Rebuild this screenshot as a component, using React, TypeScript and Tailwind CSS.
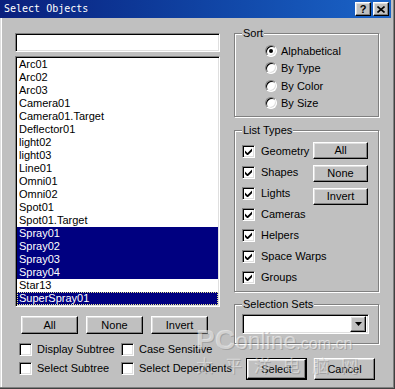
import React from "react";

const objects: string[] = [
  "Arc01",
  "Arc02",
  "Arc03",
  "Camera01",
  "Camera01.Target",
  "Deflector01",
  "light02",
  "light03",
  "Line01",
  "Omni01",
  "Omni02",
  "Spot01",
  "Spot01.Target",
  "Spray01",
  "Spray02",
  "Spray03",
  "Spray04",
  "Star13",
  "SuperSpray01",
];

const selected = ["Spray01", "Spray02", "Spray03", "Spray04", "SuperSpray01"];

const sortOptions = ["Alphabetical", "By Type", "By Color", "By Size"];
const listTypes = ["Geometry", "Shapes", "Lights", "Cameras", "Helpers", "Space Warps", "Groups"];

const raised =
  "flex items-center justify-center border border-t-white border-l-white border-b-black border-r-black bg-[#c0c0c0] shadow-[inset_-1px_-1px_0_#808080,inset_1px_1px_0_#dfdfdf]";
const sunken =
  "border border-t-[#808080] border-l-[#808080] border-b-white border-r-white bg-white shadow-[inset_1px_1px_0_#000,inset_-1px_-1px_0_#dfdfdf]";
const groupBox =
  "min-w-0 border border-[#808080] px-[7px] shadow-[1px_1px_0_#fff,inset_1px_1px_0_#fff]";
const legend = "bg-[#c0c0c0] px-[1px] text-[11px] leading-[13px]";

const CheckBox: React.FC<{ checked?: boolean }> = ({ checked }) => (
  <span className={`flex h-[13px] w-[13px] shrink-0 items-center justify-center ${sunken}`}>
    {checked && (
      <svg width="7" height="7" viewBox="0 0 7 7">
        <path d="M0 2.5 L2.5 5 L7 0.5 V3.2 L2.5 7.5 L0 5 Z" fill="#000" />
      </svg>
    )}
  </span>
);

const Radio: React.FC<{ checked?: boolean }> = ({ checked }) => (
  <span
    className={`flex h-[12px] w-[12px] shrink-0 items-center justify-center rounded-full ${sunken}`}
  >
    {checked && <span className="h-[4px] w-[4px] rounded-full bg-black" />}
  </span>
);

export default function App() {
  return (
    <div className="relative flex h-[389px] w-[395px] flex-col overflow-hidden bg-[#c0c0c0] pr-[4px] pb-[2px] font-['Liberation_Sans',Arial,sans-serif] text-[11px] text-black shadow-[inset_-1px_-1px_0_#404040,inset_-2px_-2px_0_#808080,inset_1px_0_0_#dfdfdf,inset_2px_0_0_#fff]">
      {/* title bar */}
      <div className="flex h-[18px] shrink-0 items-center bg-linear-to-r from-[#0a1f7d] to-[#1b64c8] pl-[4px] pr-[2px]">
        <span className="font-['DejaVu_Sans_Mono',monospace] text-[10px] leading-none text-white">
          Select Objects
        </span>
        <div className="ml-auto flex gap-[2px]">
          <button className={`h-[14px] w-[16px] ${raised} text-[11px] font-bold leading-none`}>
            ?
          </button>
          <button className={`h-[14px] w-[16px] ${raised}`}>
            <svg width="8" height="7" viewBox="0 0 8 7">
              <path d="M0.5 0.5 L7.5 6.5 M7.5 0.5 L0.5 6.5" stroke="#000" strokeWidth="1.6" />
            </svg>
          </button>
        </div>
      </div>

      {/* body */}
      <div className="flex flex-1 gap-[14px] pl-[15px] pt-[9px]">
        {/* left column */}
        <div className="mt-[6px] flex w-[205px] flex-col">
          <div className={`h-[19px] ${sunken}`} />
          <div className={`mt-[4px] h-[251px] p-px ${sunken}`}>
            {objects.map((name) => {
              const sel = selected.includes(name);
              const focus = name === "SuperSpray01";
              return (
                <div
                  key={name}
                  className={`h-[13px] whitespace-nowrap pl-[2px] leading-[13px] ${
                    sel ? "bg-[#000080] text-white" : ""
                  } ${focus ? "outline-1 -outline-offset-1 outline-dotted outline-[#e8e890]" : ""}`}
                >
                  {name}
                </div>
              );
            })}
          </div>
          <div className="mt-[9px] flex gap-[8px] pl-[6px]">
            {["All", "None", "Invert"].map((b) => (
              <button key={b} className={`h-[18px] w-[57px] ${raised}`}>
                {b}
              </button>
            ))}
          </div>
          <div className="mt-[9px] grid grid-cols-[102px_1fr] gap-y-[6px] pl-[4px]">
            {["Display Subtree", "Case Sensitive", "Select Subtree", "Select Dependents"].map(
              (label) => (
                <label key={label} className="flex h-[13px] items-center gap-[5px]">
                  <CheckBox />
                  <span className="whitespace-nowrap">{label}</span>
                </label>
              )
            )}
          </div>
        </div>

        {/* right column */}
        <div className="flex w-[145px] flex-col">
          <fieldset className={`h-[90px] ${groupBox}`}>
            <legend className={legend}>Sort</legend>
            <div className="pt-[2px] pl-[23px]">
              {sortOptions.map((o, i) => (
                <div key={o} className="flex h-[17.5px] items-center gap-[4px]">
                  <Radio checked={i === 0} />
                  <span className="whitespace-nowrap">{o}</span>
                </div>
              ))}
            </div>
          </fieldset>

          <fieldset className={`mt-[7px] h-[168px] ${groupBox}`}>
            <legend className={legend}>List Types</legend>
            <div className="flex pt-[4px]">
              <div className="w-0 min-w-0 flex-1">
                {listTypes.map((t) => (
                  <div key={t} className="flex h-[21px] items-center gap-[6px]">
                    <CheckBox checked />
                    <span className="whitespace-nowrap">{t}</span>
                  </div>
                ))}
              </div>
              <div className="mr-[3px] mt-[1px] flex w-[55px] shrink-0 flex-col gap-[6px]">
                {["All", "None", "Invert"].map((b) => (
                  <button key={b} className={`h-[17px] w-[55px] ${raised}`}>
                    {b}
                  </button>
                ))}
              </div>
            </div>
          </fieldset>

          <fieldset className={`mt-[6px] h-[46px] ${groupBox}`}>
            <legend className={legend}>Selection Sets</legend>
            <div className="pt-[3px]">
              <div className={`flex h-[20px] w-[127px] items-center justify-end p-[2px] ${sunken}`}>
                <span className={`h-[16px] w-[16px] ${raised}`}>
                  <svg width="7" height="4" viewBox="0 0 7 4">
                    <path d="M0 0 H7 L3.5 4 Z" fill="#000" />
                  </svg>
                </span>
              </div>
            </div>
          </fieldset>

          <div className="mt-[14px] flex gap-[7px] pl-[12px]">
            <div className="border border-black">
              <button className={`h-[20px] w-[59px] ${raised}`}>Select</button>
            </div>
            <button className={`h-[22px] w-[61px] ${raised}`}>Cancel</button>
          </div>
        </div>
      </div>

      {/* watermark */}
      <div className="pointer-events-none absolute left-[196px] top-[326px] leading-none text-white/50 [text-shadow:1px_1px_0_rgba(110,110,110,0.35)]">
        <div className="flex items-baseline">
          <span className="text-[28px] font-bold">PC</span>
          <span className="text-[23px]">online</span>
          <span className="text-[16px]">.com.cn</span>
        </div>
        <div className="mt-[2px] font-['Noto_Sans_CJK_SC',sans-serif] text-[17px] tracking-[12px] text-white/40">
          太平洋电脑网
        </div>
      </div>
    </div>
  );
}
